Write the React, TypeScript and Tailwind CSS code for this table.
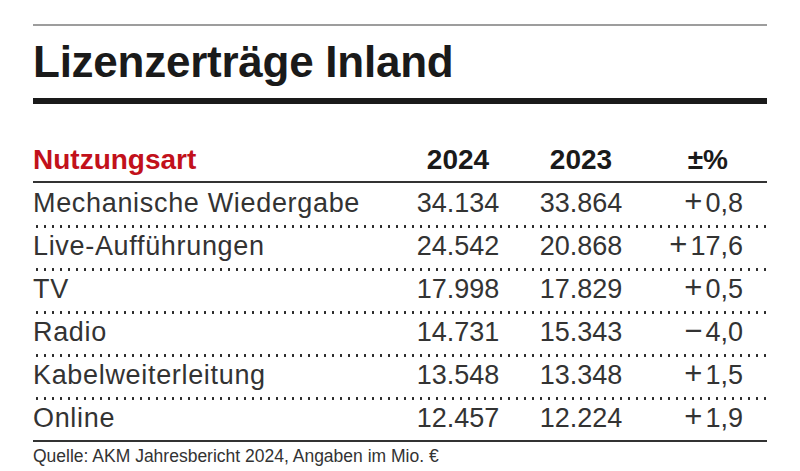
const rows = [
  { art: 'Mechanische Wiedergabe', y24: '34.134', y23: '33.864', sign: '+', pct: '0,8' },
  { art: 'Live-Aufführungen', y24: '24.542', y23: '20.868', sign: '+', pct: '17,6' },
  { art: 'TV', y24: '17.998', y23: '17.829', sign: '+', pct: '0,5' },
  { art: 'Radio', y24: '14.731', y23: '15.343', sign: '−', pct: '4,0' },
  { art: 'Kabelweiterleitung', y24: '13.548', y23: '13.348', sign: '+', pct: '1,5' },
  { art: 'Online', y24: '12.457', y23: '12.224', sign: '+', pct: '1,9' },
]

export default function App() {
  return (
    <div className="w-[800px] h-[471px] bg-white px-[33px] pt-[24px] font-['Liberation_Sans',Arial,sans-serif] text-[#333]">
      {/* Kopfzeile */}
      <div className="h-[2px] bg-[#9d9d9d]" />
      <h1 className="mt-[11px] text-[44px] leading-[50px] font-bold tracking-[-0.25px] text-[#1a1a1a]">Lizenzerträge Inland</h1>
      <div className="mt-[11px] h-[6px] bg-[#1a1a1a]" />

      {/* Tabellenkopf */}
      <div className="mt-[40px] flex border-b-2 border-[#333] pb-[5px] text-[28px] leading-[32px] font-bold">
        <div className="w-[365px] text-[#c2111b]">Nutzungsart</div>
        <div className="w-[120px] text-center text-[#1a1a1a]">2024</div>
        <div className="w-[126px] text-center text-[#1a1a1a]">2023</div>
        <div className="flex-1 text-right pr-[39px] text-[#1a1a1a]">±%</div>
      </div>

      {/* Zeilen */}
      <div className="pt-[2px]">
        {rows.map((r, i) => (
          <div key={r.art}>
            <div className="h-[40px] flex items-center pb-[4px] text-[27px] leading-[31px]">
              <div className="w-[365px] tracking-[0.025em]">{r.art}</div>
              <div className="w-[120px] text-center">{r.y24}</div>
              <div className="w-[126px] text-center">{r.y23}</div>
              <div className="flex-1 text-right pr-[24px]">
                <span className="mr-[3px] text-[31px] leading-[0px]">{r.sign}</span>
                {r.pct}
              </div>
            </div>
            {i < rows.length - 1 ? (
              <div className="h-[3px] bg-[radial-gradient(circle,#2a2a2a_1.1px,transparent_1.5px)] bg-[length:8px_3px] bg-repeat-x" />
            ) : (
              <div className="h-[2px] bg-[#333]" />
            )}
          </div>
        ))}
      </div>

      <p className="mt-[4px] text-[17.5px] leading-[20px]">Quelle: AKM Jahresbericht 2024, Angaben im Mio. €</p>
    </div>
  )
}
